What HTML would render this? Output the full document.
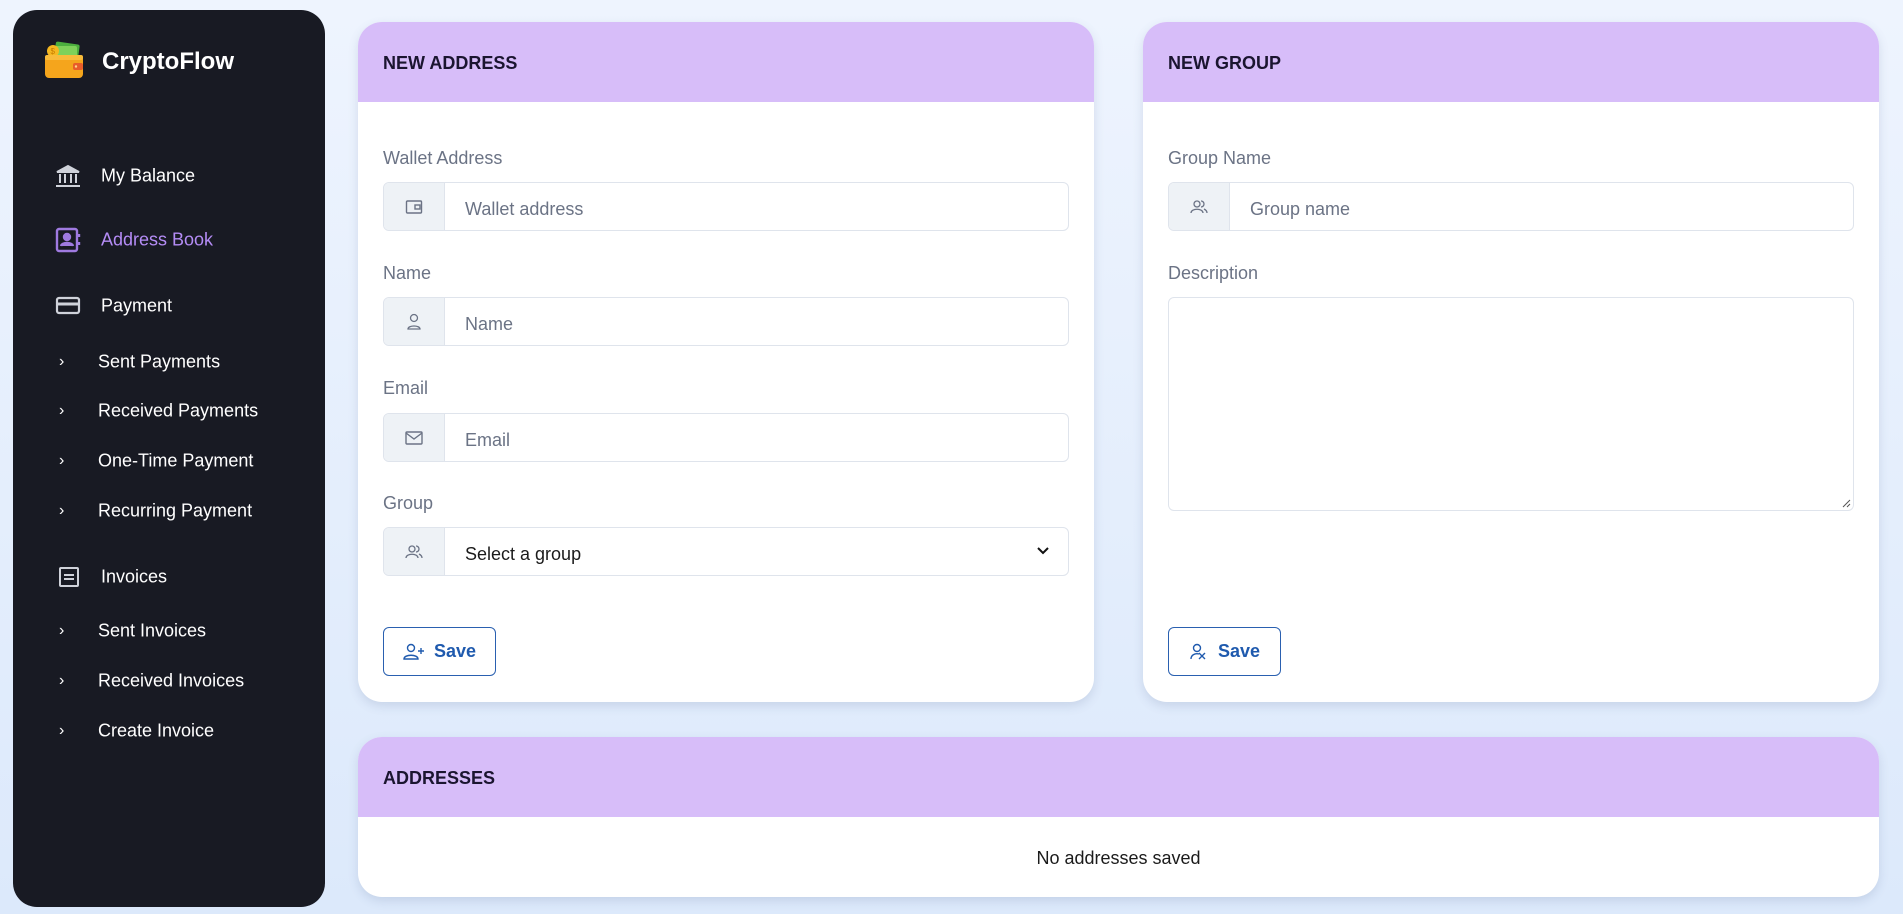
<!DOCTYPE html>
<html><head><meta charset="utf-8"><style>
*{box-sizing:border-box;margin:0;padding:0}
body{width:1903px;height:914px;overflow:hidden;font-family:"Liberation Sans",sans-serif;background:linear-gradient(180deg,#eef4fe 0%,#dce9fb 100%);position:relative}
.side{position:absolute;left:13px;top:10px;width:312px;height:897px;background:#181a23;border-radius:24px}
.logo{position:absolute;left:32px;top:31px}
.brand{position:absolute;left:89px;top:38px;color:#fff;font-weight:bold;font-size:24px}
.nav{position:absolute;left:88px;color:#fff;font-size:18px;transform:translateY(-50%)}
.nav.act{color:#b48cf5}
.ic{position:absolute;left:42px;transform:translateY(-50%)}
.chev{position:absolute;left:46px;color:#fff;font-size:16px;transform:translateY(-50%)}
.sub{position:absolute;left:85px;color:#fff;font-size:18px;transform:translateY(-50%)}
.card{position:absolute;background:#fff;border-radius:24px;box-shadow:0 4px 10px rgba(60,80,130,.15);overflow:hidden}
.hdr{height:80px;background:#d7bdf9;padding-left:25px;font-weight:bold;font-size:18px;color:#1b1530;line-height:82px}
.lbl{position:absolute;left:25px;color:#6b7385;font-size:18px}
.inp{position:absolute;left:25px;right:25px;height:49px;border:1px solid #dfe4ec;border-radius:6px;display:flex;overflow:hidden}
.add{width:61px;background:#eef2f6;border-right:1px solid #dfe4ec;display:flex;align-items:center;justify-content:center}
.ph{padding-left:20px;padding-top:3px;line-height:47px;font-size:18px;color:#6b7385;flex:1}
.btn{position:absolute;left:25px;width:113px;height:49px;border:1px solid #2a60b0;border-radius:6px;color:#1f5aae;font-size:18px;font-weight:bold;display:flex;align-items:center;justify-content:center;gap:9px}
</style></head><body>
<div class="side">
 <svg class="logo" width="40" height="38" viewBox="0 0 40 38">
  <rect x="10" y="2" width="24" height="14" rx="2" fill="#4caf3e" transform="rotate(8 22 9)"/>
  <rect x="8" y="5" width="24" height="13" rx="2" fill="#7ed15a"/>
  <circle cx="8" cy="10" r="6" fill="#f5b820"/><text x="5.5" y="13" font-size="8" fill="#c77a00" font-family="Liberation Sans">$</text>
  <rect x="0" y="14" width="38" height="23" rx="4" fill="#f5a51c"/>
  <rect x="0" y="14" width="38" height="5" rx="2" fill="#f8bb3a"/>
  <rect x="28" y="22" width="10" height="7" rx="2" fill="#e85d2a"/><circle cx="31" cy="25.5" r="1.2" fill="#ffd38a"/>
 </svg>
 <div class="brand">CryptoFlow</div>

 <svg class="ic" style="top:166px" width="26" height="24" viewBox="0 0 26 24" fill="none" stroke="#cfd2da" stroke-width="2"><path d="M2 8 L13 2 L24 8 Z" fill="#cfd2da"/><path d="M5 10v9M10 10v9M16 10v9M21 10v9M1 22h24" /></svg>
 <div class="nav" style="top:166px">My Balance</div>
 <svg class="ic" style="top:230px" width="26" height="26" viewBox="0 0 26 26" fill="none" stroke="#9f7ae0" stroke-width="2.4"><rect x="2" y="2" width="20" height="22" rx="2"/><circle cx="12" cy="10" r="3" fill="#9f7ae0"/><path d="M6 19c1-4 11-4 12 0" fill="#9f7ae0"/><path d="M24 7v3M24 15v3"/></svg>
 <div class="nav act" style="top:230px">Address Book</div>
 <svg class="ic" style="top:296px" width="26" height="22" viewBox="0 0 26 22" fill="none" stroke="#cfd2da" stroke-width="2.2"><rect x="2" y="3" width="22" height="15" rx="2"/><path d="M2 9h22" stroke-width="3"/></svg>
 <div class="nav" style="top:296px">Payment</div>
 <div class="chev" style="top:352px">›</div><div class="sub" style="top:352px">Sent Payments</div>
 <div class="chev" style="top:401px">›</div><div class="sub" style="top:401px">Received Payments</div>
 <div class="chev" style="top:451px">›</div><div class="sub" style="top:451px">One-Time Payment</div>
 <div class="chev" style="top:501px">›</div><div class="sub" style="top:501px">Recurring Payment</div>
 <svg class="ic" style="top:567px;left:44px" width="24" height="24" viewBox="0 0 24 24" fill="none" stroke="#cfd2da" stroke-width="2"><rect x="3" y="3" width="18" height="18" rx="1"/><path d="M7 10h10M7 14h10"/></svg>
 <div class="nav" style="top:567px">Invoices</div>
 <div class="chev" style="top:621px">›</div><div class="sub" style="top:621px">Sent Invoices</div>
 <div class="chev" style="top:671px">›</div><div class="sub" style="top:671px">Received Invoices</div>
 <div class="chev" style="top:721px">›</div><div class="sub" style="top:721px">Create Invoice</div>
</div>

<div class="card" style="left:358px;top:22px;width:736px;height:680px">
 <div class="hdr">NEW ADDRESS</div>
 <div class="lbl" style="top:126px">Wallet Address</div>
 <div class="inp" style="top:160px"><div class="add"><svg width="18" height="16" viewBox="0 0 18 16" fill="none" stroke="#6b7385" stroke-width="1.4"><rect x="1.5" y="2" width="15" height="12" rx="1"/><rect x="10" y="6" width="5" height="4"/></svg></div><div class="ph">Wallet address</div></div>
 <div class="lbl" style="top:241px">Name</div>
 <div class="inp" style="top:275px"><div class="add"><svg width="16" height="18" viewBox="0 0 16 18" fill="none" stroke="#6b7385" stroke-width="1.3"><circle cx="8" cy="5" r="3.5"/><path d="M2 16c0-4 12-4 12 0z"/></svg></div><div class="ph">Name</div></div>
 <div class="lbl" style="top:356px">Email</div>
 <div class="inp" style="top:391px"><div class="add"><svg width="18" height="14" viewBox="0 0 18 14" fill="none" stroke="#6b7385" stroke-width="1.4"><rect x="1" y="1" width="16" height="12" rx="1"/><path d="M1 2l8 6 8-6"/></svg></div><div class="ph">Email</div></div>
 <div class="lbl" style="top:471px">Group</div>
 <div class="inp" style="top:505px"><div class="add"><svg width="18" height="16" viewBox="0 0 18 16" fill="none" stroke="#6b7385" stroke-width="1.3"><circle cx="7" cy="5" r="3"/><path d="M1 14c0-5 12-5 12 0"/><path d="M11 2a3 3 0 0 1 0 6M14 10c2 1 3 2 3 4"/></svg></div><div class="ph" style="color:#1b1b1b">Select a group</div><svg style="margin:18px 18px 0 0" width="14" height="10" viewBox="0 0 14 10" fill="none" stroke="#111" stroke-width="2"><path d="M2 2l5 5 5-5"/></svg></div>
 <div class="btn" style="top:605px"><svg width="22" height="18" viewBox="0 0 22 18" fill="none" stroke="#1f5aae" stroke-width="1.4"><circle cx="8" cy="5" r="3.5"/><path d="M1 16c0-5 14-5 14 0z"/><path d="M18 5v6M15 8h6"/></svg>Save</div>
</div>

<div class="card" style="left:1143px;top:22px;width:736px;height:680px">
 <div class="hdr">NEW GROUP</div>
 <div class="lbl" style="top:126px">Group Name</div>
 <div class="inp" style="top:160px"><div class="add"><svg width="18" height="16" viewBox="0 0 18 16" fill="none" stroke="#6b7385" stroke-width="1.3"><circle cx="7" cy="5" r="3"/><path d="M1 14c0-5 12-5 12 0"/><path d="M11 2a3 3 0 0 1 0 6M14 10c2 1 3 2 3 4"/></svg></div><div class="ph">Group name</div></div>
 <div class="lbl" style="top:241px">Description</div>
 <div class="inp" style="top:275px;height:214px"><svg style="position:absolute;right:2px;bottom:2px" width="10" height="10" viewBox="0 0 10 10" stroke="#555" stroke-width="1"><path d="M9 2L2 9M9 6L6 9"/></svg></div>
 <div class="btn" style="top:605px"><svg width="20" height="18" viewBox="0 0 20 18" fill="none" stroke="#1f5aae" stroke-width="1.4"><circle cx="8" cy="5" r="3.5"/><path d="M2 16c0-4 4-6 8-5"/><path d="M10 16l6-6M16 16l-6-6"/></svg>Save</div>
</div>

<div class="card" style="left:358px;top:737px;width:1521px;height:160px">
 <div class="hdr">ADDRESSES</div>
 <div style="text-align:center;font-size:18px;color:#1b1b1b;margin-top:31px">No addresses saved</div>
</div>
</body></html>
